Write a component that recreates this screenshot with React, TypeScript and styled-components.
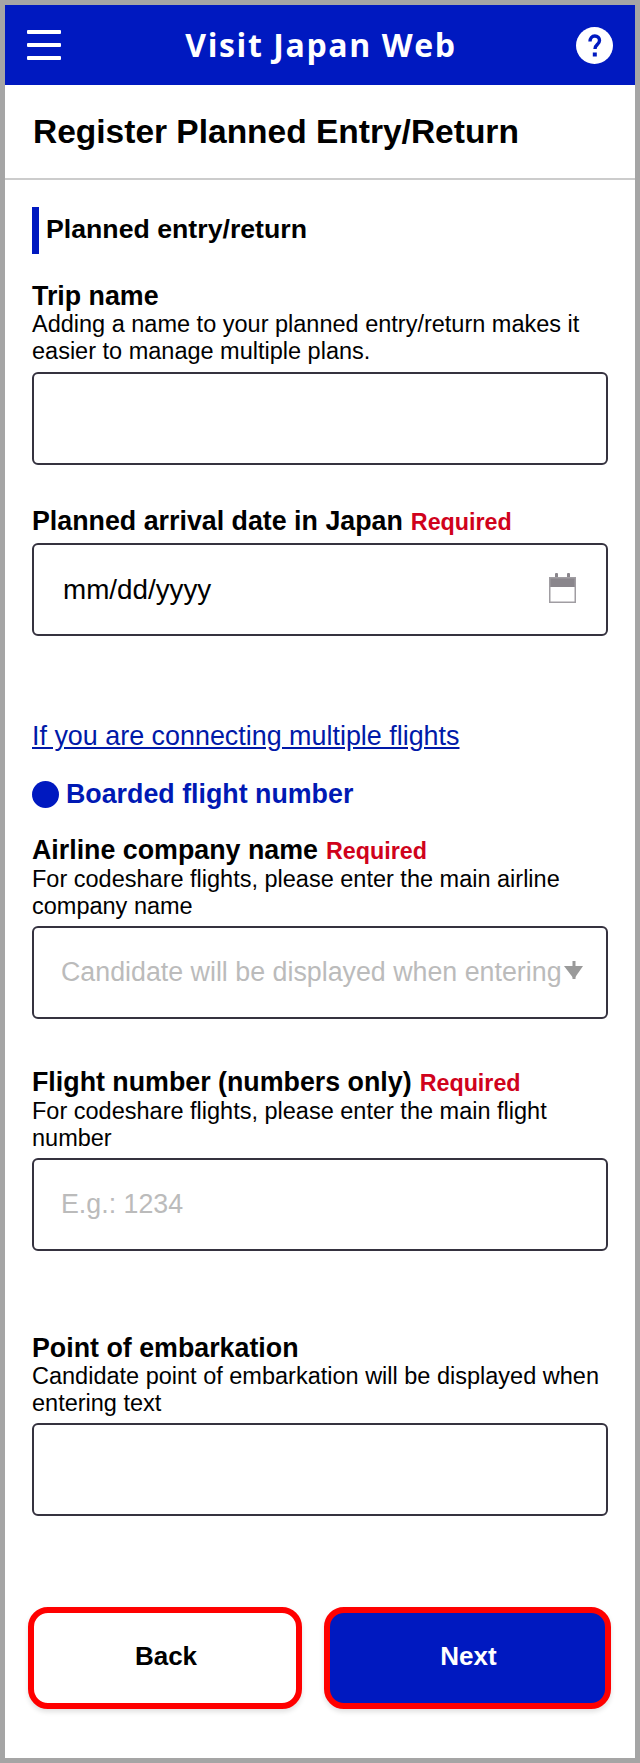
import { createGlobalStyle } from "styled-components";
import styled from "styled-components";

const GlobalStyle = createGlobalStyle`
  html, body {
    margin: 0;
    padding: 0;
    background: #fff;
  }
  * {
    box-sizing: border-box;
  }
`;

const Frame = styled.div`
  width: 640px;
  height: 1763px;
  border: 5px solid #a5a5a5;
  background: #fff;
  font-family: "Liberation Sans", Arial, sans-serif;
  color: #000;
  overflow: hidden;
`;

const Header = styled.header`
  height: 80px;
  background: #0019c0;
  display: flex;
  align-items: center;
  justify-content: space-between;
  padding: 0 22px;
`;

const Burger = styled.div`
  width: 34px;
  display: flex;
  flex-direction: column;
  gap: 9px;
  span {
    display: block;
    height: 4px;
    background: #fff;
    border-radius: 1px;
  }
`;

const Brand = styled.div`
  margin-left: 5px;
  font-family: "Open Sans", sans-serif;
  font-weight: 700;
  font-size: 32px;
  letter-spacing: 1.6px;
  color: #fff;
  line-height: 40px;
`;

const PageTitle = styled.h1`
  margin: 0;
  height: 95px;
  padding-left: 28px;
  display: flex;
  align-items: center;
  font-size: 33.5px;
  font-weight: 700;
  border-bottom: 2px solid #ccc;
`;

const Main = styled.main`
  padding: 27px 27px 0;
`;

const SectionTitle = styled.h2`
  margin: 0;
  height: 47px;
  border-left: 7px solid #0019c0;
  padding: 0 0 2px 7px;
  display: flex;
  align-items: center;
  font-size: 26.7px;
  font-weight: 700;
`;

const Field = styled.div<{ $top: number }>`
  margin-top: ${(props) => props.$top}px;
`;

const Label = styled.div`
  font-size: 26.8px;
  font-weight: 700;
  line-height: 30px;
`;

const Required = styled.span`
  color: #d0021b;
  font-size: 23.3px;
  margin-left: 8px;
`;

const Hint = styled.div`
  font-size: 23.5px;
  line-height: 27px;
`;

const InputBox = styled.div<{ $top: number }>`
  position: relative;
  margin-top: ${(props) => props.$top}px;
  height: 93px;
  width: 576px;
  border: 2px solid #35323f;
  border-radius: 6px;
  display: flex;
  align-items: center;
  font-size: 26.8px;
  background: #fff;
`;

const DateText = styled.span`
  margin-left: 29px;
  font-size: 27.8px;
  flex: 1;
`;

const Placeholder = styled.span`
  margin-left: 27px;
  color: #bbb;
  white-space: nowrap;
`;

const Caret = styled.svg`
  position: absolute;
  right: 23px;
  top: 33px;
`;

const CalendarIcon = styled.svg`
  margin: 0 30px 4px 0;
`;

const ConnectLink = styled.a`
  display: block;
  margin-top: 85px;
  font-size: 26.9px;
  line-height: 30px;
  color: #0019a8;
  text-decoration: underline;
`;

const SubTitle = styled.div`
  margin-top: 28px;
  display: flex;
  align-items: center;
  gap: 7px;
  font-size: 26.8px;
  font-weight: 700;
  line-height: 30px;
  color: #0019b4;
`;

const Dot = styled.span`
  width: 27px;
  height: 27px;
  border-radius: 50%;
  background: #0019c0;
`;

const Actions = styled.div`
  margin-top: 91px;
  margin-left: -4px;
  display: flex;
  gap: 22px;
`;

const ActionButton = styled.button<{ $primary?: boolean; $wide?: boolean }>`
  flex: none;
  width: ${(props) => (props.$wide ? 287 : 274)}px;
  height: 102px;
  padding: 0 0 4px 2px;
  border: 6px solid #ff0000;
  border-radius: 20px;
  background: ${(props) => (props.$primary ? "#0019c0" : "#fff")};
  color: ${(props) => (props.$primary ? "#fff" : "#000")};
  font-family: "Liberation Sans", Arial, sans-serif;
  font-size: 26px;
  font-weight: 700;
  box-shadow: 0 3px 5px rgba(0, 0, 0, 0.12);
`;

const App = () => {
  return (
    <Frame>
      <GlobalStyle />
      <Header>
        <Burger>
          <span />
          <span />
          <span />
        </Burger>
        <Brand>Visit Japan Web</Brand>
        <svg width="37" height="37" viewBox="0 0 37 37">
          <circle cx="18.5" cy="18.5" r="18.5" fill="#fff" />
          <path
            d="M14 14.500c0-3.200 2-5.500 4.800-5.500 2.800 0 4.700 1.900 4.700 4.500 0 2.200-1.200 3.300-2.500 4.400-1.400 1.200-2 2.100-2 4.100"
            fill="none"
            stroke="#0019c0"
            strokeWidth="3.4"
          />
          <rect x="16.800" y="25.500" width="4" height="4" fill="#0019c0" />
        </svg>
      </Header>
      <PageTitle>Register Planned Entry/Return</PageTitle>
      <Main>
        <SectionTitle>Planned entry/return</SectionTitle>

        <Field $top={27}>
          <Label>Trip name</Label>
          <Hint>Adding a name to your planned entry/return makes it</Hint>
          <Hint>easier to manage multiple plans.</Hint>
          <InputBox $top={7} />
        </Field>

        <Field $top={41}>
          <Label>
            Planned arrival date in Japan<Required>Required</Required>
          </Label>
          <InputBox $top={6}>
            <DateText>mm/dd/yyyy</DateText>
            <CalendarIcon width="27" height="30" viewBox="0 0 27 30">
              <rect x="6" y="0" width="3" height="6" rx="1" fill="#8a868c" />
              <rect x="18" y="0" width="3" height="6" rx="1" fill="#8a868c" />
              <rect x="0" y="4" width="27" height="10" fill="#8a868c" />
              <rect x="0.750" y="4.750" width="25.500" height="24.500" fill="none" stroke="#a09da2" strokeWidth="1.500" />
            </CalendarIcon>
          </InputBox>
        </Field>

        <ConnectLink>If you are connecting multiple flights</ConnectLink>

        <SubTitle>
          <Dot />
          Boarded flight number
        </SubTitle>

        <Field $top={26}>
          <Label>
            Airline company name<Required>Required</Required>
          </Label>
          <Hint>For codeshare flights, please enter the main airline</Hint>
          <Hint>company name</Hint>
          <InputBox $top={6}>
            <Placeholder>Candidate will be displayed when entering</Placeholder>
            <Caret width="19" height="19" viewBox="0 0 19 19">
              <path d="M0 5h19L10 18z" fill="#9a9a9a" />
              <rect x="8.500" y="0" width="3" height="18" fill="#9a9a9a" />
            </Caret>
          </InputBox>
        </Field>

        <Field $top={48}>
          <Label>
            Flight number (numbers only)<Required>Required</Required>
          </Label>
          <Hint>For codeshare flights, please enter the main flight</Hint>
          <Hint>number</Hint>
          <InputBox $top={6}>
            <Placeholder>E.g.: 1234</Placeholder>
          </InputBox>
        </Field>

        <Field $top={82}>
          <Label>Point of embarkation</Label>
          <Hint>Candidate point of embarkation will be displayed when</Hint>
          <Hint>entering text</Hint>
          <InputBox $top={6} />
        </Field>

        <Actions>
          <ActionButton>Back</ActionButton>
          <ActionButton $primary $wide>
            Next
          </ActionButton>
        </Actions>
      </Main>
    </Frame>
  );
};

export default App;
